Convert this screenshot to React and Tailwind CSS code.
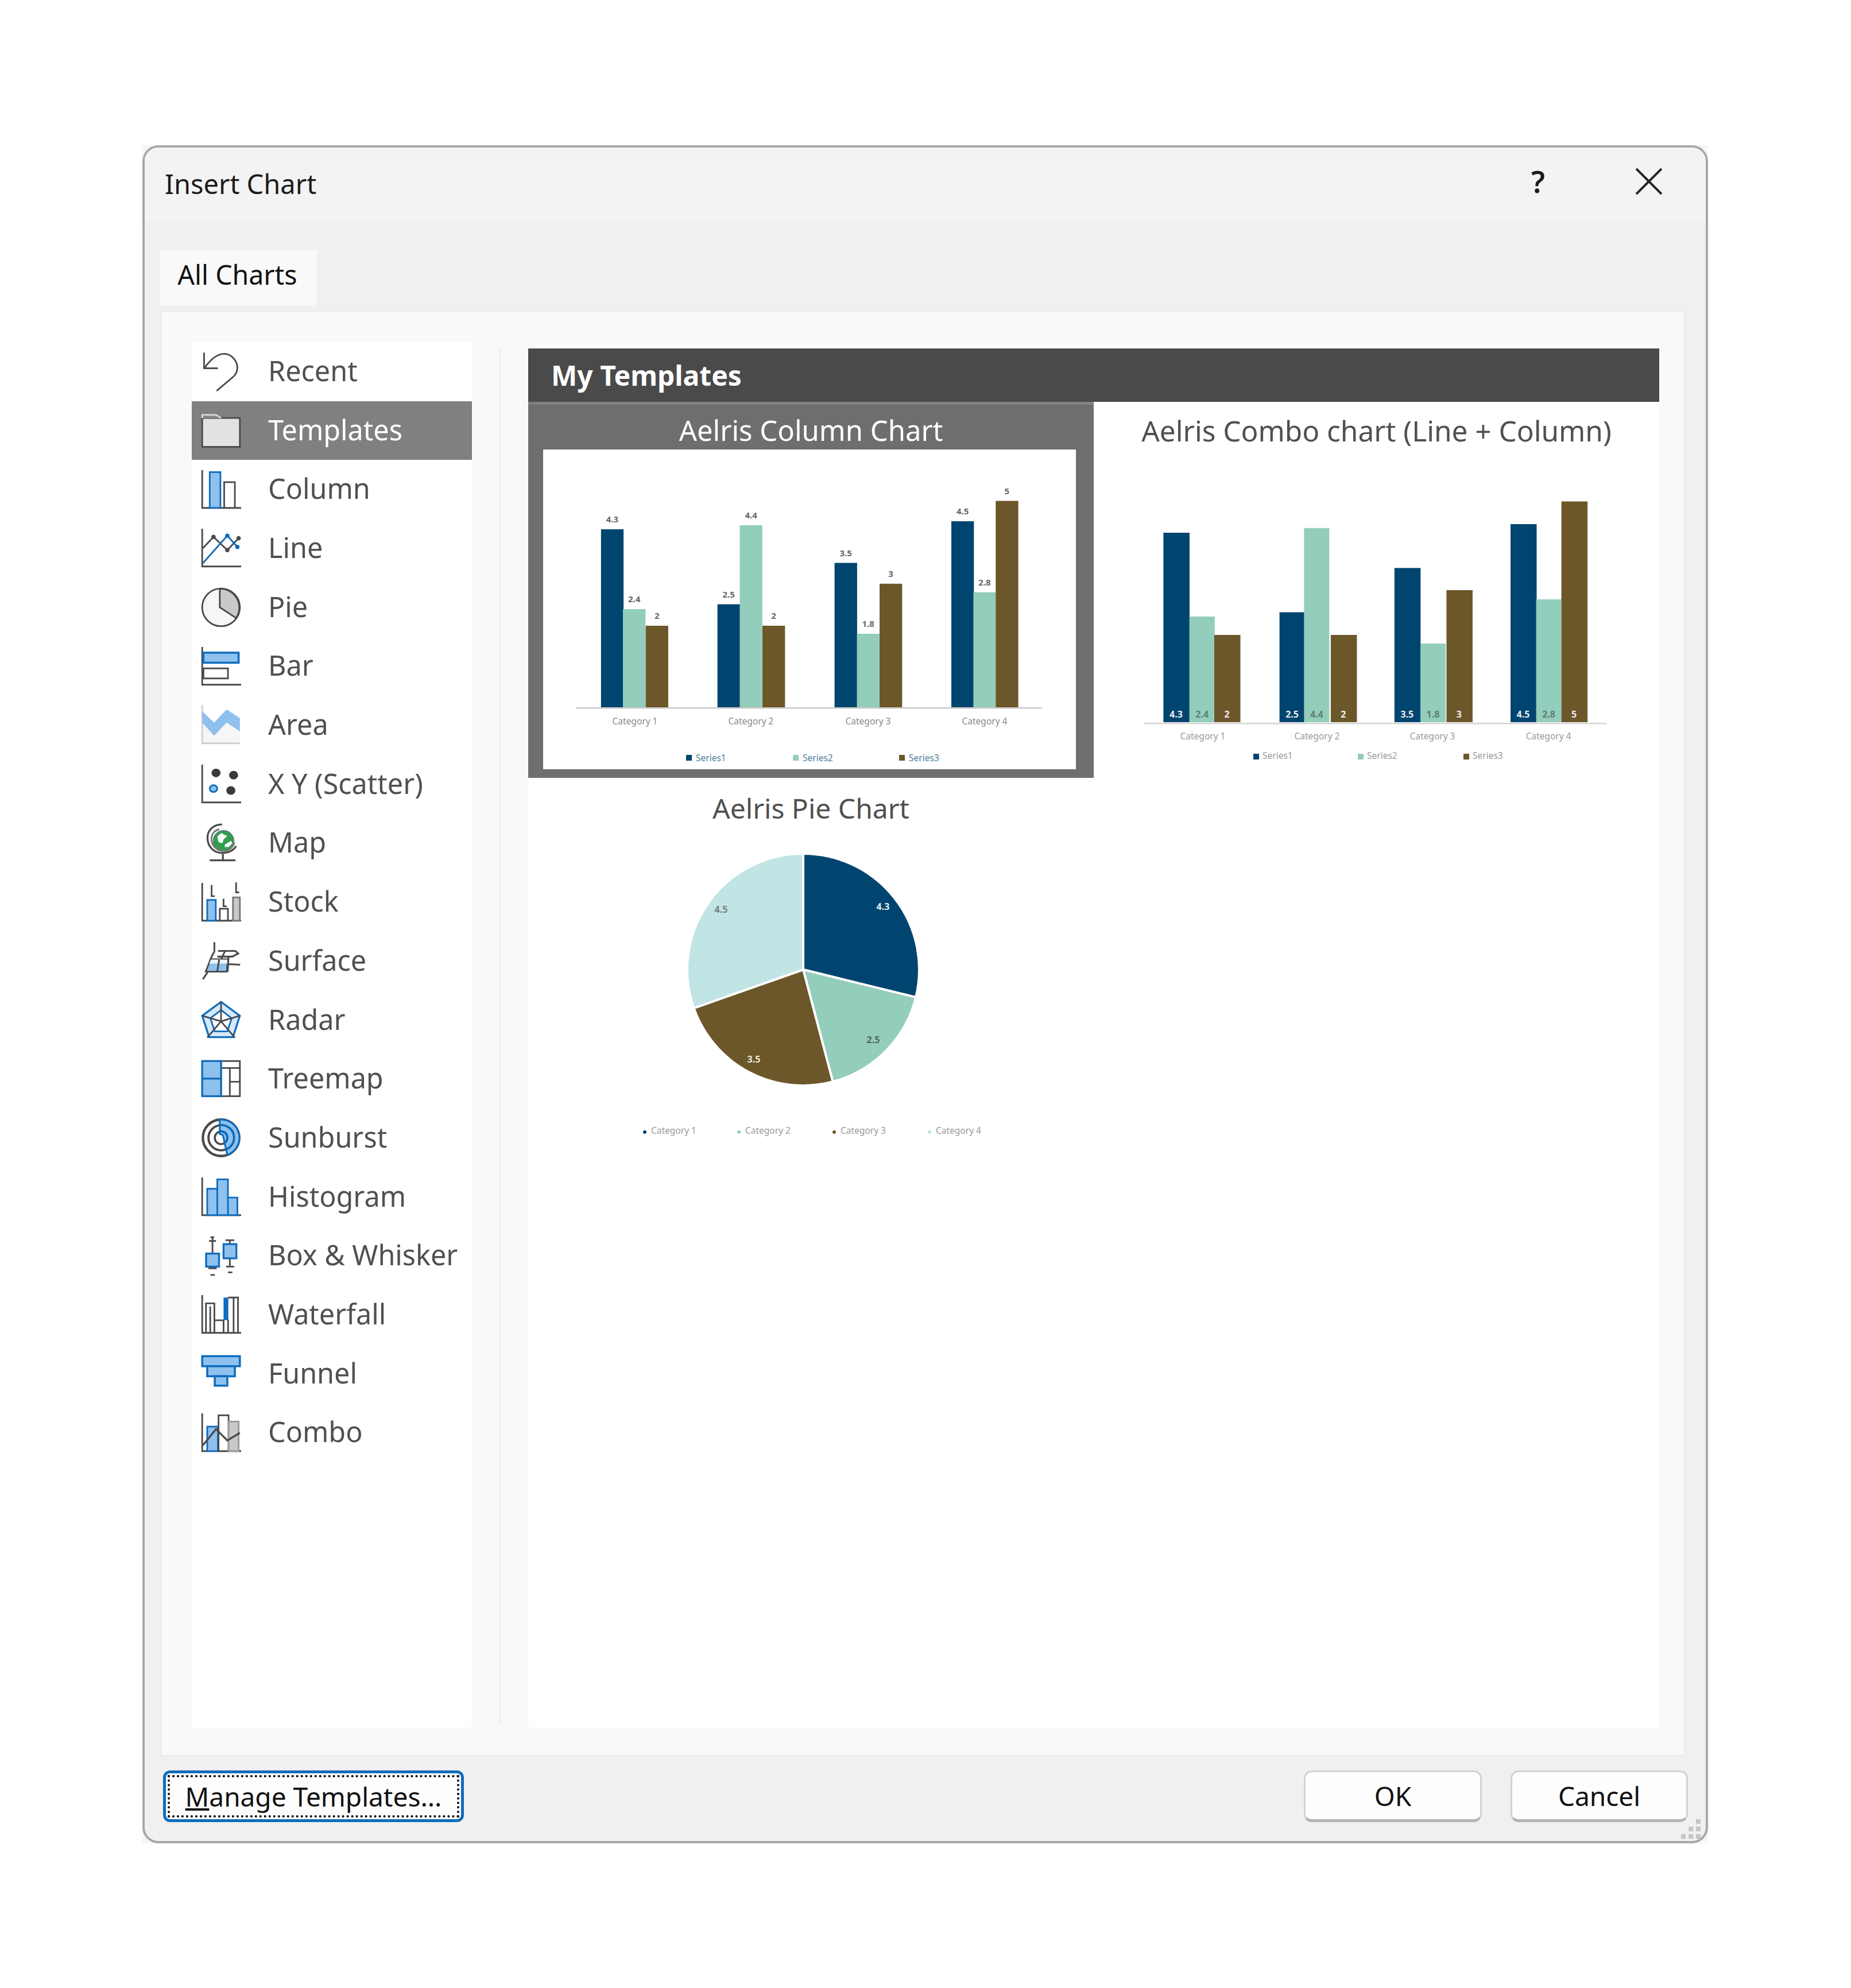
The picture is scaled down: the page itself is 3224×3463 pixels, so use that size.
const dark = "#4a4a4a";
const blue = "#0f6cbd";
const soft = "#8fc1ee";
const navy = "#00456f";
const teal = "#93cdbb";
const brown = "#6b572a";
const pale = "#c1e4e4";

function Ico({ children }) {
  return (
    <svg viewBox="0 0 32 32" className="w-[70px] h-[70px] shrink-0" fill="none" stroke={dark} strokeWidth="1.3">
      {children}
    </svg>
  );
}

const Axis = ({ color = dark }) => <path d="M1 0.5V30.5H32" stroke={color} />;

const icons = {
  Recent: (
    <Ico>
      <path d="M2.5 1v12.5h11" />
      <path d="M3 13C8 6 13 2 18.5 2c6 0 10.5 6 10.5 11 0 3-1 5-3 7L12.5 31.5" />
    </Ico>
  ),
  Templates: (
    <Ico>
      <path d="M1 6h30v23H1z" fill="#e2e2e2" />
      <path d="M1 6V3.5h11l4 2.5" fill="#8a8a8a" stroke="#d8d8d8" />
    </Ico>
  ),
  Column: (
    <Ico>
      <Axis />
      <rect x="7" y="2" width="8.5" height="28.5" fill={soft} stroke={blue} />
      <rect x="18.5" y="10" width="8.5" height="20.5" fill="#fff" />
    </Ico>
  ),
  Line: (
    <Ico>
      <Axis />
      <path d="M1.5 16L10 7l11 10.5L30 8" />
      <path d="M1.5 28L21 6l8 9" stroke={blue} />
      <g fill={dark} stroke="none">
        <circle cx="10" cy="7" r="1.7" />
        <circle cx="21" cy="17.5" r="1.7" />
        <circle cx="30" cy="8" r="1.7" />
      </g>
      <g fill={blue} stroke="none">
        <circle cx="21" cy="6" r="1.7" />
        <circle cx="29" cy="15" r="1.7" />
      </g>
    </Ico>
  ),
  Pie: (
    <Ico>
      <circle cx="16" cy="16" r="15" fill="#f6f6f6" />
      <path d="M15 1.2V16l13 8.5A15 15 0 0 0 15 1.2z" fill="#c9c9c9" />
    </Ico>
  ),
  Bar: (
    <Ico>
      <Axis />
      <rect x="2" y="5" width="28" height="8" fill={soft} stroke={blue} strokeWidth="1.6" />
      <rect x="2" y="17.5" width="19.5" height="8" fill="#fff" />
    </Ico>
  ),
  Area: (
    <Ico>
      <path d="M1 14L10.5 24.5 20.5 14 31 21V30H1z" fill="#f6f6f6" stroke="none" />
      <path d="M1 0V30.5H31" stroke="#cfcfcf" />
      <path d="M1 5L10.5 14 20.5 3.5 31 10.5V21L20.5 14 10.5 24.5 1 14z" fill={soft} stroke="none" />
    </Ico>
  ),
  "X Y (Scatter)": (
    <Ico>
      <Axis />
      <g fill="#3a3a3a" stroke="none">
        <ellipse cx="12" cy="7" rx="3.6" ry="3.4" />
        <ellipse cx="26" cy="8.8" rx="3.6" ry="3.4" />
        <ellipse cx="23.8" cy="21" rx="3.6" ry="3.4" />
      </g>
      <ellipse cx="10" cy="19.5" rx="3" ry="2.7" fill={soft} stroke={blue} />
    </Ico>
  ),
  Map: (
    <Ico>
      <circle cx="18" cy="14" r="8.2" fill="#2f9e4f" stroke="#777" strokeWidth="0.7" />
      <path d="M13 11c2-3 4-4 5-2l3 1-3 3-1 3-3-1zM19 17l5-3 1 2-3 3-3 0z" fill="#fff" stroke="none" />
      <path d="M16.8 1C10 1 5.2 5.5 5.2 11.5c0 7 5 12.2 11.3 12.2 5.2 0 9.3-2 11.5-5.5" strokeWidth="1.5" />
      <path d="M14.5 4.8C10.5 5.8 8.4 9 8.4 12.5c0 5.6 4.4 9.6 9.6 9.6 4.2 0 7.2-2.6 8.7-6.8" strokeWidth="1.3" stroke="#777" />
      <path d="M17.5 24.5v4.6M7 29.5h20.5" strokeWidth="1.5" />
    </Ico>
  ),
  Stock: (
    <Ico>
      <Axis />
      <rect x="5" y="14" width="6.8" height="16.5" fill={soft} stroke={blue} />
      <rect x="15" y="21" width="6.5" height="9.5" fill="#fff" />
      <rect x="25.5" y="12" width="5.5" height="18.5" fill="#c9c9c9" stroke="#777" />
      <path d="M8.5 2v9h2.5M18 13v6h2.5M28 0v8h2.5" />
    </Ico>
  ),
  Surface: (
    <Ico>
      <path d="M7.6 14.6H21.3L20.6 24.5H3.8z" fill={soft} stroke={dark} />
      <path d="M8 14.8h13v3.2H6.6z" fill="#eaf4fc" stroke="none" />
      <path d="M10.7 1V8.5M13.7 8H27.4L29.7 10 25 12.5H13M10.7 8.5L9 11.5 7.6 14.6M19 8.5L16 14.6M14.5 15L13 24.5M22 12L21.3 24.5M22 18.5L31.2 19M5.3 25L1.5 30.6" strokeWidth="1.4" />
    </Ico>
  ),
  Radar: (
    <Ico>
      <path d="M16 1.5L31 12.5 25.5 29.5H6.5L1 12.5z" fill="#d6e9f9" stroke={blue} strokeWidth="1.5" />
      <path d="M16 8L24.5 14.5 21 25H11L7.5 14.5z" fill="#fff" stroke={blue} />
      <path d="M16 1.5V17M16 17L31 12.5M16 17L1 12.5M16 17L27 30M16 17L5 30" />
    </Ico>
  ),
  Treemap: (
    <Ico>
      <rect x="16" y="1.5" width="15" height="28" fill="#fff" />
      <path d="M16 7h15M23 7v22.5M23 18h8" />
      <rect x="1" y="1.5" width="15" height="28" fill={soft} stroke={blue} strokeWidth="1.5" />
      <path d="M1 15.5h15" stroke={blue} strokeWidth="1.5" />
    </Ico>
  ),
  Sunburst: (
    <Ico>
      <circle cx="16" cy="16" r="14.5" fill="#fff" strokeWidth="2" />
      <circle cx="16" cy="16" r="10" strokeWidth="1.8" />
      <circle cx="16" cy="16" r="5" strokeWidth="1.6" />
      <path d="M15 1.5A14.5 14.5 0 0 1 21 29.6L18 16A3 3 0 0 0 15 13z" fill={soft} stroke={blue} strokeWidth="1.4" />
      <path d="M15 6A10 10 0 0 1 19.8 25.3M15 11A5 5 0 0 1 18 20.5" stroke={blue} strokeWidth="1.8" />
    </Ico>
  ),
  Histogram: (
    <Ico>
      <Axis />
      <path d="M5 30.5V9.5h8V2h8.5v14.5H29v14z" fill={soft} stroke={blue} />
      <path d="M13 9.5v21M21.5 16.5v14" stroke={blue} />
    </Ico>
  ),
  "Box & Whisker": (
    <Ico>
      <path d="M7.5 1h3M9.2 1v13M6.5 4h5.5M9.2 24.4v1.3M6 25.7h6.5M7.5 31h3.5" />
      <rect x="4.1" y="14" width="10.3" height="10.4" fill={soft} stroke={blue} strokeWidth="1.5" />
      <path d="M19.5 3.4h7M23 3.4v3.1M23 17.8v6.6M20 24.4h6.5M21.5 29h3.5" />
      <rect x="18" y="6.5" width="10.2" height="11.3" fill={soft} stroke={blue} strokeWidth="1.5" />
    </Ico>
  ),
  Waterfall: (
    <Ico>
      <Axis />
      <path d="M4 30V7h6.7v23M7.4 30V9.5M10.7 20.5H18V30" />
      <rect x="18" y="2.4" width="3.8" height="18" fill={blue} stroke="none" />
      <path d="M21.6 2.4H29.5V30M21.6 20V30M26 2.4V30" />
    </Ico>
  ),
  Funnel: (
    <Ico>
      <rect x="1" y="2" width="30" height="8" fill={soft} stroke={blue} strokeWidth="1.6" />
      <rect x="5" y="10" width="22" height="8" fill={soft} stroke={blue} strokeWidth="1.6" />
      <rect x="11" y="18" width="10" height="7.5" fill={soft} stroke={blue} strokeWidth="1.6" />
    </Ico>
  ),
  Combo: (
    <Ico>
      <Axis />
      <rect x="5" y="11" width="8.5" height="19.5" fill={soft} stroke={blue} />
      <rect x="14" y="2" width="8" height="28.5" fill="#fff" />
      <rect x="22" y="7" width="8" height="23.5" fill="#c9c9c9" stroke="#999" />
      <path d="M1.5 26L12 13l9 9 10-6" strokeWidth="1.5" />
    </Ico>
  ),
};

const chartNames = Object.keys(icons);

const columnBars = [
  [100.8, 139, navy, "4.3"], [139, 278, teal, "2.4"], [178.6, 307, brown, "2"],
  [303.6, 269.6, navy, "2.5"], [342.5, 132, teal, "4.4"], [382, 307, brown, "2"],
  [507.6, 197.5, navy, "3.5"], [546.6, 321, teal, "1.8"], [586, 233.8, brown, "3"],
  [711, 125, navy, "4.5"], [749.4, 248.7, teal, "2.8"], [788.3, 89.5, brown, "5"],
];

const comboBars = [
  [121.4, 145, navy, "4.3"], [166.7, 291, teal, "2.4"], [210, 323, brown, "2"],
  [323.6, 283.5, navy, "2.5"], [366.3, 136.8, teal, "4.4"], [412.9, 323, brown, "2"],
  [523.8, 206.4, navy, "3.5"], [569, 338, teal, "1.8"], [614.4, 245, brown, "3"],
  [726, 130, navy, "4.5"], [770.6, 261, teal, "2.8"], [814.6, 90.5, brown, "5"],
];

function ColumnChart() {
  return (
    <svg viewBox="0 0 928 557" className="w-[928px] h-[557px] block">
      {columnBars.map(([x, top, fill, label]) => (
        <g key={x}>
          <rect x={x} y={top} width="39.3" height={450 - top} fill={fill} />
          <text x={x + 19.6} y={top - 12} textAnchor="middle" fontSize="15" fontWeight="700" fill="#666">{label}</text>
        </g>
      ))}
      <rect x="57" y="449" width="812" height="2.5" fill="#c9c9c9" />
      {[160, 362, 566, 769].map((x, i) => (
        <text key={x} x={x} y="479" textAnchor="middle" fontSize="15.5" fill="#8a8a8a">{"Category " + (i + 1)}</text>
      ))}
      {[254, 440, 625].map((x, i) => (
        <g key={x}>
          <rect x={x - 5} y="532" width="10" height="10" fill={[navy, teal, brown][i]} />
          <text x={x + 12} y="543" fontSize="15.5" fill="#4f7d9c">{"Series" + (i + 1)}</text>
        </g>
      ))}
    </svg>
  );
}

function ComboChart() {
  return (
    <svg viewBox="0 0 984 557" className="w-[984px] h-[557px] block">
      {comboBars.map(([x, top, fill, label], i) => (
        <g key={x}>
          <rect x={x} y={top} width={i % 3 === 1 ? 44 : 45.5} height={475 - top} fill={fill} />
          <text x={x + 22} y="467" textAnchor="middle" fontSize="16" fontWeight="700" fill={fill === teal ? "#5f7f76" : "#eeeeee"}>{label}</text>
        </g>
      ))}
      <rect x="88" y="476" width="805" height="2.5" fill="#d4d4d4" />
      {[190, 389, 590, 792].map((x, i) => (
        <text key={x} x={x} y="505" textAnchor="middle" fontSize="15.5" fill="#9a9a9a">{"Category " + (i + 1)}</text>
      ))}
      {[283, 465, 649].map((x, i) => (
        <g key={x}>
          <rect x={x - 5} y="530" width="10" height="10" fill={[navy, teal, brown][i]} />
          <text x={x + 11} y="539" fontSize="15.5" fill="#9a9a9a">{"Series" + (i + 1)}</text>
        </g>
      ))}
    </svg>
  );
}

function wedge(from, to) {
  const r = 202;
  const a = ((from - 90) * Math.PI) / 180;
  const b = ((to - 90) * Math.PI) / 180;
  const large = to - from > 180 ? 1 : 0;
  return `M0 0L${r * Math.cos(a)} ${r * Math.sin(a)}A${r} ${r} 0 ${large} 1 ${r * Math.cos(b)} ${r * Math.sin(b)}Z`;
}

function PieChart() {
  return (
    <svg viewBox="0 0 984 570" className="w-[984px] h-[570px] block">
      <g transform="translate(479 261)">
        <path d={wedge(0, 103.8)} fill={navy} stroke="#fff" strokeWidth="4" />
        <path d={wedge(103.8, 165.2)} fill={teal} stroke="#fff" strokeWidth="4" />
        <path d={wedge(165.2, 250.6)} fill={brown} stroke="#fff" strokeWidth="4" />
        <path d={wedge(250.6, 360)} fill={pale} stroke="#fff" strokeWidth="4" />
      </g>
      <g fontSize="16" fontWeight="700" textAnchor="middle">
        <text x="618" y="157" fill="#e8eef2">4.3</text>
        <text x="601" y="389" fill="#55655f">2.5</text>
        <text x="393" y="423" fill="#efe9da">3.5</text>
        <text x="336" y="162" fill="#6f7f7f">4.5</text>
      </g>
      {[203, 367, 533, 699].map((x, i) => (
        <g key={x}>
          <circle cx={x} cy="544" r="3" fill={[navy, teal, brown, pale][i]} />
          <text x={x + 11} y="547" fontSize="15.5" fill="#9a9a9a">{"Category " + (i + 1)}</text>
        </g>
      ))}
    </svg>
  );
}

function Row({ name, selected }) {
  return (
    <div className={"h-[102.7px] flex items-center pl-[16px] gap-[47px] text-[48.5px] " + (selected ? "bg-[#808080] text-white" : "text-[#505050]")}>
      {icons[name]}
      <span className="mb-[4px]">{name}</span>
    </div>
  );
}

export default function App() {
  return (
    <div className="w-[3224px] h-[3463px] bg-white pt-[253px] pl-[248px] font-['Noto_Sans',sans-serif]">
      <div className="w-[2727px] h-[2958px] bg-[#f6f6f6]">
        <div className="w-full h-full rounded-[28px] border-[4px] border-[#a8a8a8] bg-[#f0f0f0] overflow-hidden flex flex-col">
          <div className="h-[128px] shrink-0 bg-[#f3f3f3] flex items-center pl-[35px] pr-[76px] pb-[10px]">
            <span className="mt-[8px] text-[47px] text-[#1c1c1c]">Insert Chart</span>
            <span className="ml-auto mr-[158px] text-[52px] font-semibold text-[#1c1c1c]">?</span>
            <svg viewBox="0 0 46 46" className="w-[46px] h-[46px]" fill="none" stroke="#222" strokeWidth="4">
              <path d="M1 1L45 45M45 1L1 45" />
            </svg>
          </div>
          <div className="pl-[27px] pt-[51px]">
            <div className="w-[273px] h-[96px] bg-[#f9f9f9] flex items-center justify-center pb-[10px] pr-[4px] text-[46.5px] text-[#111]">All Charts</div>
          </div>
          <div className="mt-[8px] ml-[27px] mr-[35px] h-[2520px] shrink-0 bg-[#f9f9f9] border-[3px] border-[#ececec] pl-[52px] pt-[53px] flex">
            <div className="w-[488px] h-[2413px] bg-white">
              {chartNames.map((name) => (
                <Row key={name} name={name} selected={name === "Templates"} />
              ))}
            </div>
            <div className="w-[3px] h-[2400px] mt-[9px] ml-[48px] mr-[47px] bg-[#f0f0f0]"></div>
            <div className="w-[1970px] h-[2404px] mt-[9px] bg-white">
              <div className="mt-[2px] h-[93px] bg-[#4a4a4a] flex items-center pl-[40px] text-[48px] font-bold text-white">My Templates</div>
              <div className="grid grid-cols-2">
                <div className="h-[655px] bg-[#6e6e6e] border-t-[5px] border-[#808080] flex flex-col">
                  <div className="h-[78px] pt-[12px] flex items-center justify-center text-[49px] text-white">Aelris Column Chart</div>
                  <div className="ml-[26px] w-[928px] bg-white">
                    <ColumnChart />
                  </div>
                </div>
                <div className="h-[655px] flex flex-col">
                  <div className="h-[83px] pt-[18px] flex items-center justify-center text-[49.5px] text-[#505050]">Aelris Combo chart (Line + Column)</div>
                  <ComboChart />
                </div>
                <div className="flex flex-col">
                  <div className="h-[73px] pt-[32px] flex items-center justify-center text-[48px] text-[#505050]">Aelris Pie Chart</div>
                  <PieChart />
                </div>
              </div>
            </div>
          </div>
          <div className="pl-[32px] pr-[31px] pt-[24px] flex">
            <button className="w-[524px] h-[90px] rounded-[12px] border-[5px] border-[#0f6cbd] bg-[#fdfdfd] p-[3px]">
              <div className="w-full h-full border-[4px] border-dotted border-black flex items-center justify-center text-[46px] text-[#111]">
                <span><span className="underline">M</span>anage Templates...</span>
              </div>
            </button>
            <button className="ml-auto w-[310px] h-[90px] rounded-[14px] border-[3px] border-b-[5px] border-[#d2d2d2] border-b-[#b4b4b4] bg-[#fdfdfd] text-[46px] text-[#111]">OK</button>
            <button className="ml-[50px] w-[309px] h-[90px] rounded-[14px] border-[3px] border-b-[5px] border-[#d2d2d2] border-b-[#b4b4b4] bg-[#fdfdfd] text-[46px] text-[#111]">Cancel</button>
          </div>
          <div className="flex justify-end pr-[8px] mt-[-6px]">
            <svg viewBox="0 0 36 36" className="w-[36px] h-[36px]" fill="#c6c6c6">
              <rect x="27" y="1" width="8" height="8" />
              <rect x="14" y="14" width="8" height="8" />
              <rect x="27" y="14" width="8" height="8" />
              <rect x="1" y="27" width="8" height="8" />
              <rect x="14" y="27" width="8" height="8" />
              <rect x="27" y="27" width="8" height="8" />
            </svg>
          </div>
        </div>
      </div>
    </div>
  );
}
